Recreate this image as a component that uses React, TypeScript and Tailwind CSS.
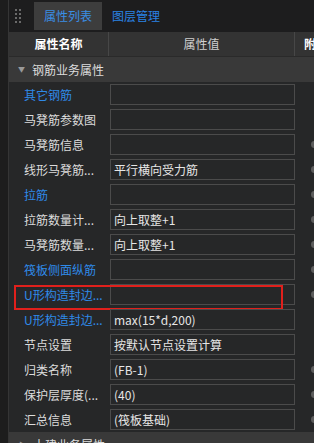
import React from 'react';

type Row = { label: string; value: string; link?: boolean; dot?: boolean; marked?: boolean };

const ROWS: Row[] = [
  { label: '其它钢筋', value: '', link: true },
  { label: '马凳筋参数图', value: '' },
  { label: '马凳筋信息', value: '', dot: true },
  { label: '线形马凳筋...', value: '平行横向受力筋', dot: true },
  { label: '拉筋', value: '', link: true, dot: true },
  { label: '拉筋数量计...', value: '向上取整+1', dot: true },
  { label: '马凳筋数量...', value: '向上取整+1', dot: true },
  { label: '筏板侧面纵筋', value: '', link: true, dot: true },
  { label: 'U形构造封边...', value: '', link: true, dot: true, marked: true },
  { label: 'U形构造封边...', value: 'max(15*d,200)', link: true },
  { label: '节点设置', value: '按默认节点设置计算' },
  { label: '归类名称', value: '(FB-1)', dot: true },
  { label: '保护层厚度(...', value: '(40)', dot: true },
  { label: '汇总信息', value: '(筏板基础)', dot: true },
];

function Grip() {
  return (
    <div className="grid grid-cols-2 gap-x-[2px] gap-y-[2px] ml-[6px]">
      {Array.from({ length: 8 }).map((_, i) => (
        <div key={i} className="w-[2px] h-[2px] bg-[#6a6a6a]" />
      ))}
    </div>
  );
}

function PropRow({ row }: { row: Row }) {
  return (
    <div className="relative flex h-[25px] items-center">
      <div
        className={`w-[100px] shrink-0 pl-[15px] whitespace-nowrap text-[12px] ${
          row.link ? 'text-[#2f8ae8]' : 'text-[#dcdcdc]'
        }`}
      >
        {row.label}
      </div>
      <div className="w-[186px] shrink-0 pl-px">
        <div className="h-[21px] w-[185px] border border-[#4b4b4b] flex items-center px-[3px] text-[12px] text-[#e6e6e6] whitespace-nowrap">
          {row.value}
        </div>
      </div>
      <div className="w-[40px] shrink-0 flex items-center">
        {row.dot && <div className="ml-[16px] w-[7px] h-[7px] rounded-full bg-[#5c5c5c]" />}
      </div>
      {row.marked && (
        <div className="absolute left-[5px] top-[3px] w-[269px] h-[25px] border-2 border-[#e0201c]" />
      )}
    </div>
  );
}

export default function App() {
  return (
    <div className="w-[314px] h-[443px] overflow-hidden bg-[#262728] font-['Noto_Sans_CJK_SC','Liberation_Sans',sans-serif] flex">
      <div className="w-[9px] shrink-0 bg-[#1d1d1d] border-r border-[#353535]" />
      <div className="w-[345px] shrink-0">
        <div className="h-[32px] bg-[#1d1d1e] flex items-center">
          <Grip />
          <div className="ml-[13px] h-[28px] w-[68px] bg-[#3d3d3d] flex items-center justify-center text-[12px] text-[#3a8ee6]">
            属性列表
          </div>
          <div className="ml-[10px] text-[12px] text-[#2a82e4]">图层管理</div>
        </div>
        <div className="h-[25px] bg-[#333333] border-b border-[#2a2a2a] flex text-[12px]">
          <div className="w-[100px] shrink-0 flex items-center justify-center font-bold text-white border-r border-[#474747]">
            属性名称
          </div>
          <div className="w-[186px] shrink-0 flex items-center justify-center text-[#cfcfcf] border-r border-[#474747]">
            属性值
          </div>
          <div className="flex-1 flex items-center pl-[9px] font-bold text-white">附加</div>
        </div>
        <div className="h-[25px] bg-[#393939] flex items-center text-[12px] text-[#dddddd]">
          <span className="ml-[9px] text-[7px] text-[#9a9a9a]">▼</span>
          <span className="ml-[7px]">钢筋业务属性</span>
        </div>
        {ROWS.map((row, i) => (
          <PropRow key={i} row={row} />
        ))}
        <div className="h-[25px] bg-[#393939] flex items-center text-[12px] text-[#dddddd]">
          <span className="ml-[10px] text-[7px] text-[#9a9a9a]">▶</span>
          <span className="ml-[7px]">土建业务属性</span>
        </div>
      </div>
    </div>
  );
}
